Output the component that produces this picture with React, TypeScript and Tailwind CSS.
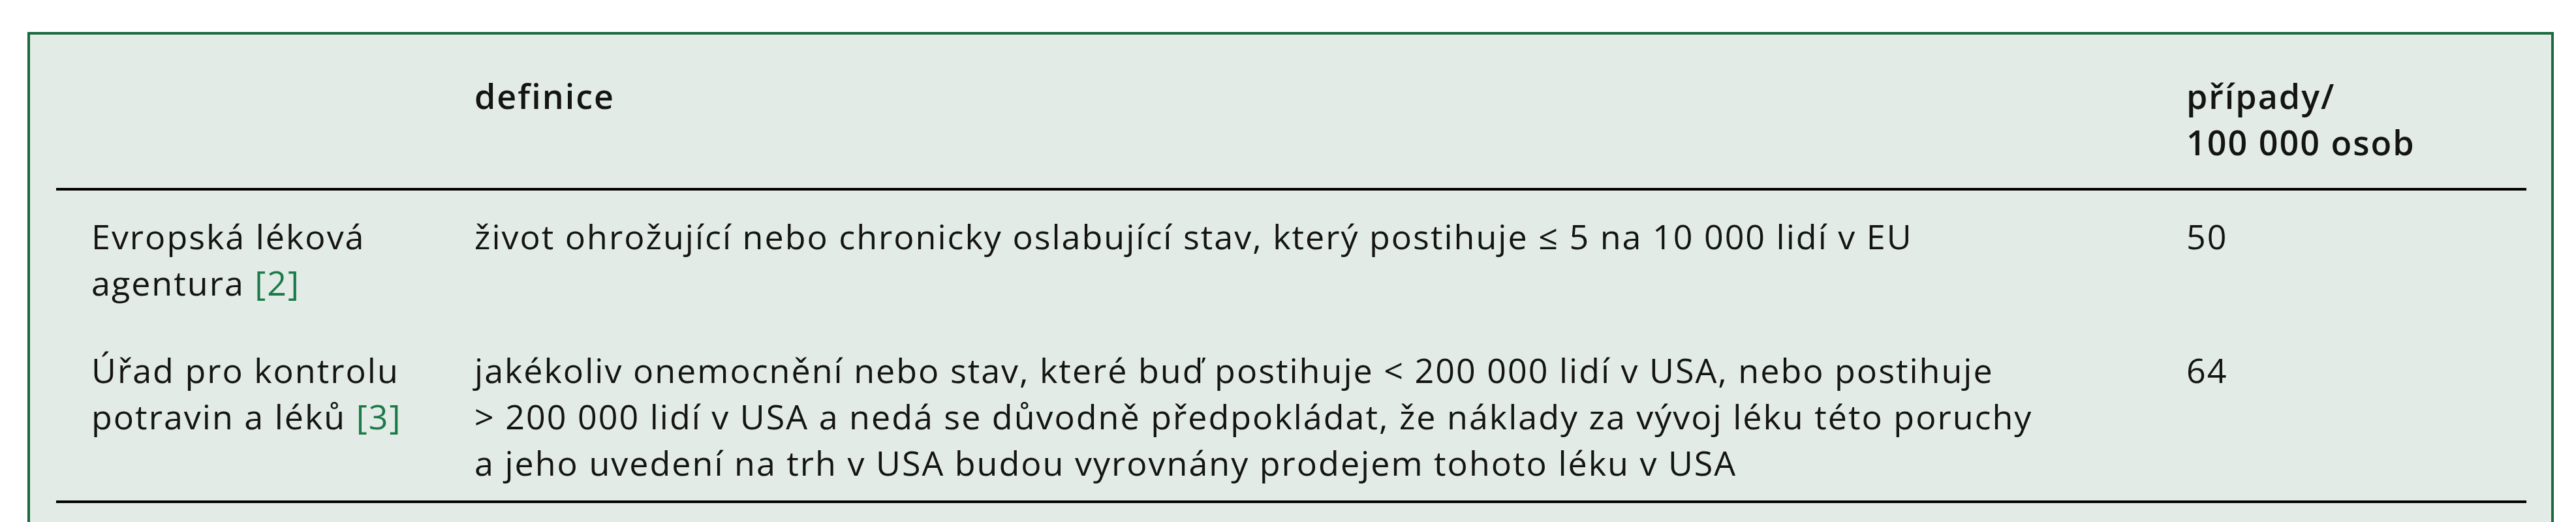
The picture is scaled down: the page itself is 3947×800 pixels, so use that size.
const rows = [
  {
    org: (
      <>
        Evropská léková agentura <span className="text-[#1b7a48]">[2]</span>
      </>
    ),
    def: "život ohrožující nebo chronicky oslabující stav, který postihuje ≤ 5 na 10 000 lidí v EU",
    cases: "50",
    pad: "pt-[34px] pb-[31px]",
  },
  {
    org: (
      <>
        Úřad pro kontrolu potravin a léků <span className="text-[#1b7a48]">[3]</span>
      </>
    ),
    def: (
      <>
        jakékoliv onemocnění nebo stav, které buď postihuje &lt; 200 000 lidí v USA, nebo postihuje
        <br />
        &gt; 200 000 lidí v USA a nedá se důvodně předpokládat, že náklady za vývoj léku této poruchy
        <br />
        a jeho uvedení na trh v USA budou vyrovnány prodejem tohoto léku v USA
      </>
    ),
    cases: "64",
    pad: "pt-[32px] pb-[23px]",
  },
];

function Row({ org, def, cases, pad }: (typeof rows)[number]) {
  return (
    <div className={`grid grid-cols-[641px_2623px_1fr] ${pad}`}>
      <div className="pl-[54px] pr-[40px]">{org}</div>
      <div>{def}</div>
      <div>{cases}</div>
    </div>
  );
}

export default function App() {
  return (
    <div className="h-[800px] overflow-hidden bg-white pl-[42px] pt-[49px] font-['Open_Sans',sans-serif] text-[52px] font-medium leading-[71px] tracking-[2px] text-[#141414]">
      <div className="h-[760px] w-[3871px] border-x-4 border-t-4 border-[#1a6b3c] bg-[#e2ebe6] pl-[40px] pr-[38px] pt-[58px]">
        <div className="grid grid-cols-[641px_2623px_1fr] border-b-4 border-black pb-[35px] font-semibold">
          <div />
          <div>definice</div>
          <div>
            případy/
            <br />
            100 000 osob
          </div>
        </div>
        <div className="border-b-4 border-black">
          {rows.map((r, i) => (
            <Row key={i} {...r} />
          ))}
        </div>
      </div>
    </div>
  );
}
